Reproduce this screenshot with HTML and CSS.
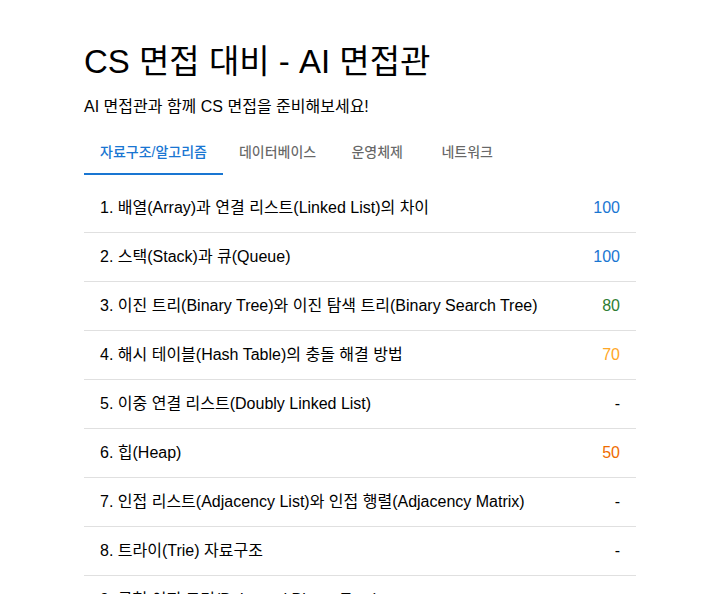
FILE: index.html
```html
<!DOCTYPE html>
<html lang="ko">
<head>
<meta charset="utf-8">
<title>CS 면접 대비 - AI 면접관</title>
<link rel="stylesheet" href="styles.css">
</head>
<body>
<main class="page">
  <h1 class="title">CS 면접 대비 - AI 면접관</h1>
  <p class="subtitle">AI 면접관과 함께 CS 면접을 준비해보세요!</p>
  <nav class="tabs">
    <button class="tab active">자료구조/알고리즘</button>
    <button class="tab">데이터베이스</button>
    <button class="tab">운영체제</button>
    <button class="tab">네트워크</button>
  </nav>
  <ul class="list">
    <li class="row"><span class="q">1. 배열(Array)과 연결 리스트(Linked List)의 차이</span><span class="score s-blue">100</span></li>
    <li class="row"><span class="q">2. 스택(Stack)과 큐(Queue)</span><span class="score s-blue">100</span></li>
    <li class="row"><span class="q">3. 이진 트리(Binary Tree)와 이진 탐색 트리(Binary Search Tree)</span><span class="score s-green">80</span></li>
    <li class="row"><span class="q">4. 해시 테이블(Hash Table)의 충돌 해결 방법</span><span class="score s-yellow">70</span></li>
    <li class="row"><span class="q">5. 이중 연결 리스트(Doubly Linked List)</span><span class="score">-</span></li>
    <li class="row"><span class="q">6. 힙(Heap)</span><span class="score s-orange">50</span></li>
    <li class="row"><span class="q">7. 인접 리스트(Adjacency List)와 인접 행렬(Adjacency Matrix)</span><span class="score">-</span></li>
    <li class="row"><span class="q">8. 트라이(Trie) 자료구조</span><span class="score">-</span></li>
    <li class="row"><span class="q">9. 균형 이진 트리(Balanced Binary Tree)</span><span class="score">-</span></li>
  </ul>
</main>
</body>
</html>
```

FILE: styles.css
```css
html, body {
  margin: 0;
  padding: 0;
  background: #ffffff;
}
body {
  font-family: "Liberation Sans", Arial, "Noto Sans CJK KR", sans-serif;
  color: rgba(0, 0, 0, 0.87);
}
.page {
  padding: 42px 76px 0 84px;
}
.title {
  margin: 0;
  font-size: 33px;
  line-height: 40px;
  font-weight: 400;
  color: #000;
}
.subtitle {
  margin: 13px 0 0;
  font-size: 16px;
  line-height: 24px;
  color: #000;
}
.tabs {
  display: flex;
  margin-top: 8px;
  height: 48px;
}
.tab {
  border: 0;
  background: none;
  font-family: inherit;
  font-size: 14px;
  font-weight: 500;
  color: rgba(0, 0, 0, 0.6);
  padding: 0 16px;
  min-width: 90px;
  height: 48px;
  border-bottom: 2px solid transparent;
  box-sizing: border-box;
  padding-top: 2px;
}
.tab.active {
  color: #1976d2;
  border-bottom-color: #1976d2;
}
.list {
  list-style: none;
  margin: 0;
  padding: 9px 0 0;
}
.row {
  display: flex;
  justify-content: space-between;
  align-items: center;
  padding: 12px 16px;
  font-size: 16px;
  line-height: 24px;
  border-bottom: 1px solid #e0e0e0;
  color: #000;
}
.score {
  color: #000;
}
.s-blue { color: #1976d2; }
.s-green { color: #2e7d32; }
.s-yellow { color: #ffa726; }
.s-orange { color: #ef6c00; }
```
